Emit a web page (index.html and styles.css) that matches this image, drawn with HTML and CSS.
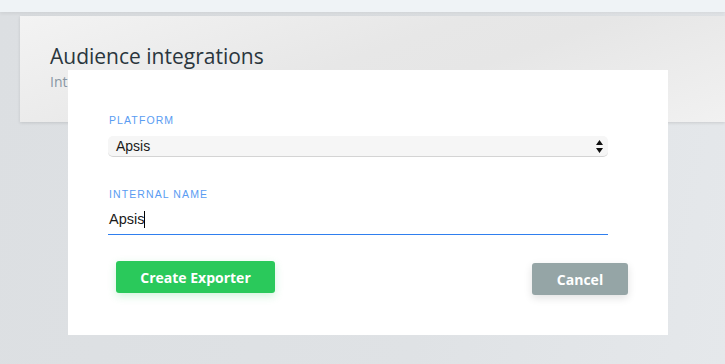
FILE: index.html
```html
<!DOCTYPE html>
<html>
<head>
<meta charset="utf-8">
<link rel="stylesheet" href="styles.css">
</head>
<body>
<div class="topbar"></div>
<div class="page">
  <div class="card">
    <h1 class="title">Audience integrations</h1>
    <p class="subtitle">Integrations</p>
  </div>
</div>
<div class="modal">
  <div class="field">
    <div class="label">PLATFORM</div>
    <div class="select">
      <span class="select-value">Apsis</span>
      <svg class="arrows" width="7" height="13" viewBox="0 0 7 13"><path d="M3.5 0 L7 5 L0 5 Z M0 8 L7 8 L3.5 13 Z" fill="#111"/></svg>
    </div>
  </div>
  <div class="field second">
    <div class="label">INTERNAL NAME</div>
    <div class="input"><span class="input-value">Apsis</span><span class="caret"></span></div>
  </div>
  <div class="actions">
    <button class="btn btn-create">Create Exporter</button>
    <button class="btn btn-cancel">Cancel</button>
  </div>
</div>
</body>
</html>
```
FILE: styles.css
```css
html, body {
  margin: 0;
  padding: 0;
  height: 100%;
}
body {
  background: linear-gradient(100deg, #dcdfe2 0%, #dfe2e5 60%, #e5e8eb 100%);
  font-family: "Open Sans", sans-serif;
  overflow: hidden;
  position: relative;
}
.topbar {
  height: 12px;
  background: #eff3f6;
  box-shadow: 0 2px 3px rgba(0,0,0,0.06);
}
.page {
  padding: 4px 0 0 20px;
}
.card {
  height: 106px;
  box-sizing: border-box;
  padding: 26px 30px 0;
  background: linear-gradient(160deg, #f3f3f3 0%, #e7e7e7 45%, #e6e6e6 60%, #f1f1f1 100%);
  box-shadow: 0 1px 3px rgba(0,0,0,0.12);
}
.title {
  margin: 0;
  font-weight: 400;
  font-size: 21px;
  line-height: 28px;
  color: #2a363d;
}
.subtitle {
  margin: 2px 0 0;
  font-size: 14px;
  line-height: 20px;
  color: #8896a3;
}
.modal {
  position: absolute;
  left: 68px;
  top: 70px;
  width: 600px;
  height: 265px;
  box-sizing: border-box;
  background: #fff;
  padding: 44px 60px 0 40px;
}
.label {
  font-family: "Liberation Sans", Arial, sans-serif;
  font-size: 10.5px;
  line-height: 12px;
  letter-spacing: 1.1px;
  color: #5a9cf2;
  padding-left: 1px;
}
.select {
  margin-top: 10px;
  height: 21px;
  box-sizing: border-box;
  background: #f6f6f6;
  border-radius: 5px;
  border-bottom: 1px solid #d4d4d4;
  display: flex;
  align-items: center;
  justify-content: space-between;
  padding: 0 5px 0 8px;
}
.select-value {
  font-family: "Liberation Sans", Arial, sans-serif;
  font-size: 14px;
  color: #1a1a1a;
}
.arrows {
  display: block;
}
.second {
  margin-top: 31px;
}
.input {
  margin-top: 8px;
  height: 27px;
  box-sizing: border-box;
  border-bottom: 1px solid #2f7fef;
  display: flex;
  align-items: flex-start;
  padding-left: 1px;
  padding-top: 3px;
}
.input-value {
  font-family: "Liberation Sans", Arial, sans-serif;
  font-size: 14.5px;
  line-height: 16px;
  color: #1a1a1a;
}
.caret {
  width: 1px;
  height: 17px;
  background: #000;
  margin-top: 0;
}
.actions {
  display: flex;
  justify-content: space-between;
  align-items: flex-start;
  margin-top: 26px;
  padding-left: 8px;
  margin-right: -20px;
}
.btn {
  border: none;
  border-radius: 3px;
  color: #fff;
  font-family: "Open Sans", sans-serif;
  font-weight: 700;
  font-size: 14px;
  padding: 0;
  cursor: pointer;
}
.btn-create {
  width: 159px;
  height: 32px;
  background: #2ac95b;
  box-shadow: 0 3px 8px rgba(42,201,91,0.22);
}
.btn-cancel {
  margin-top: 2px;
  width: 96px;
  height: 32px;
  background: #95a5a6;
  box-shadow: 0 3px 8px rgba(0,0,0,0.12);
}
```
